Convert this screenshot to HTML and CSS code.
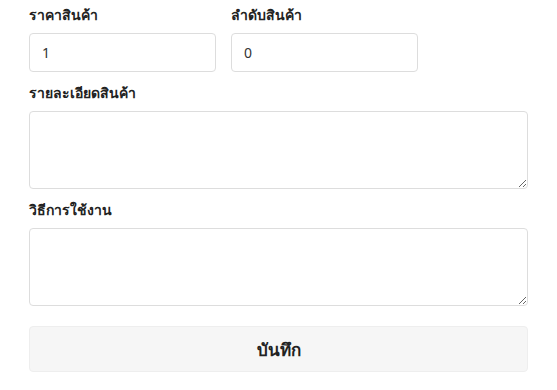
FILE: index.html
```html
<!DOCTYPE html>
<html lang="th">
<head>
    <meta charset="UTF-8">
    <meta name="viewport" content="width=device-width, initial-scale=1.0">
    <title>แก้ไขสินค้า</title>
    <link rel="stylesheet" href="styles.css">
</head>
<body>

    <form class="product-form">
        <!-- Price / order -->
        <div class="row">
            <div class="field field-small">
                <label for="price">ราคาสินค้า</label>
                <input type="text" id="price" value="1">
            </div>
            <div class="field field-small">
                <label for="order">ลำดับสินค้า</label>
                <input type="text" id="order" value="0">
            </div>
        </div>

        <div class="field">
            <label for="detail">รายละเอียดสินค้า</label>
            <textarea id="detail"></textarea>
        </div>

        <div class="field">
            <label for="usage">วิธีการใช้งาน</label>
            <textarea id="usage"></textarea>
        </div>

        <button type="submit" class="save-btn">บันทึก</button>
    </form>

</body>
</html>
```

FILE: styles.css
```css
body {
    font-family: "Noto Sans", "Liberation Sans", sans-serif;
    margin: 0;
    padding: 0;
    background-color: #fff;
    color: #222;
}

.product-form {
    padding: 5px 29px 0;
}

.row {
    display: flex;
    gap: 15px;
}

.field {
    margin-bottom: 11px;
}

.field-small {
    width: 187px;
}

.field label {
    display: block;
    font-size: 14px;
    font-weight: 600;
    line-height: 20px;
    margin-bottom: 8px;
}

input, textarea {
    display: block;
    box-sizing: border-box;
    width: 100%;
    margin: 0;
    border: 1px solid #ddd;
    border-radius: 4px;
    font-family: "Noto Sans", "Liberation Sans", sans-serif;
    font-size: 14px;
    color: #333;
}

input {
    height: 39px;
    padding: 0 12px;
}

textarea {
    height: 78px;
    padding: 8px 12px;
    resize: vertical;
}

.save-btn {
    display: block;
    width: 100%;
    height: 46px;
    margin-top: 20px;
    border: 1px solid #eee;
    border-radius: 4px;
    background-color: #f6f6f6;
    font-family: "Noto Sans", "Liberation Sans", sans-serif;
    font-size: 17px;
    font-weight: 600;
    color: #222;
}
```
